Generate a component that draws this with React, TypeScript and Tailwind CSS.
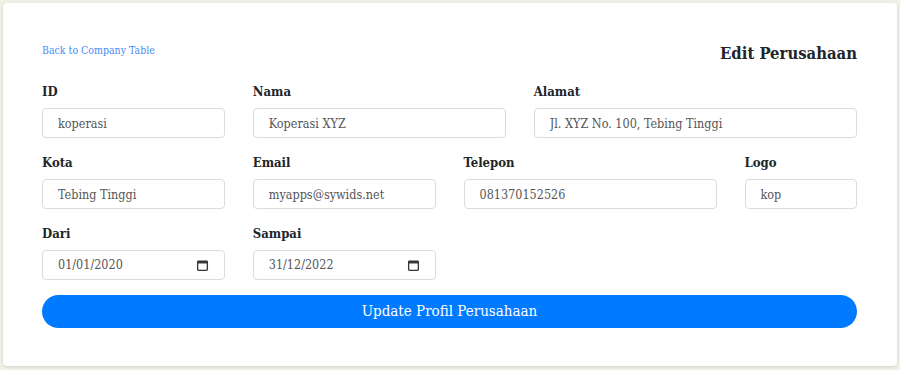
import React from "react";

const serif = "font-['DejaVu_Serif_Condensed','DejaVu_Serif','Liberation_Serif',serif] font-stretch-condensed";

function CalendarIcon() {
  return (
    <svg width="13" height="13" viewBox="0 0 16 16" className="shrink-0 text-[#333]">
      <rect x="2" y="2.5" width="12" height="11.5" rx="1" fill="none" stroke="currentColor" strokeWidth="1.6" />
      <rect x="2" y="2.5" width="12" height="3" fill="currentColor" />
    </svg>
  );
}

type FieldProps = {
  label: string;
  value: string;
  span: string;
  date?: boolean;
};

function Field({ label, value, span, date }: FieldProps) {
  return (
    <div className={`${span} flex flex-col`}>
      <label className="mb-[6px] h-5 text-[13px] font-bold leading-5 text-[#212529]">{label}</label>
      {date ? (
        <div className="flex h-[30px] items-center justify-between rounded-[4px] border border-[#d9dce1] bg-white pl-[15px] pr-[15px]">
          <span className="text-[12.5px] text-[#555]">{value}</span>
          <CalendarIcon />
        </div>
      ) : (
        <input
          defaultValue={value}
          className="h-[30px] w-full rounded-[4px] border border-[#d9dce1] bg-white px-[15px] text-[12.5px] text-[#555] outline-none"
        />
      )}
    </div>
  );
}

export default function App() {
  return (
    <div className={`h-[370px] w-full bg-[#eef1e6] p-[3px] ${serif}`}>
      <div className="h-[363px] rounded-[4px] bg-white pl-[39px] pr-[40px] pt-[38px] shadow-[0_1px_3px_rgba(0,0,0,0.12)]">
        <div className="flex h-7 items-start justify-between">
          <a href="#" className="pt-[1px] text-[10.5px] leading-4 text-[#4a8bf5]">
            Back to Company Table
          </a>
          <h1 className="text-[16.5px] font-bold leading-[26px] text-[#212529]">Edit Perusahaan</h1>
        </div>

        <div className="mt-[13px] grid grid-cols-12 gap-x-7 gap-y-[15px]">
          <Field label="ID" value="koperasi" span="col-span-3" />
          <Field label="Nama" value="Koperasi XYZ" span="col-span-4" />
          <Field label="Alamat" value="Jl. XYZ No. 100, Tebing Tinggi" span="col-span-5" />

          <Field label="Kota" value="Tebing Tinggi" span="col-span-3" />
          <Field label="Email" value="myapps@sywids.net" span="col-span-3" />
          <Field label="Telepon" value="081370152526" span="col-span-4" />
          <Field label="Logo" value="kop" span="col-span-2" />

          <Field label="Dari" value="01/01/2020" span="col-span-3" date />
          <Field label="Sampai" value="31/12/2022" span="col-span-3" date />
        </div>

        <button
          type="button"
          className="mt-[15px] h-[33px] w-full rounded-full bg-[#007bff] text-[15px] text-white"
        >
          Update Profil Perusahaan
        </button>
      </div>
    </div>
  );
}
